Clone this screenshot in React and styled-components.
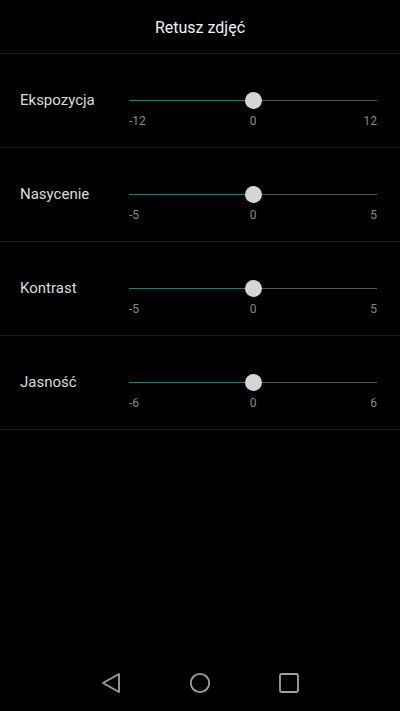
import styled, { createGlobalStyle } from 'styled-components'

const GlobalStyle = createGlobalStyle`
  html, body {
    margin: 0;
    padding: 0;
    background: #000;
  }
  * {
    box-sizing: border-box;
  }
`;

const adjustments = [
  { name: 'Ekspozycja', min: -12, max: 12, value: 0 },
  { name: 'Nasycenie', min: -5, max: 5, value: 0 },
  { name: 'Kontrast', min: -5, max: 5, value: 0 },
  { name: 'Jasność', min: -6, max: 6, value: 0 },
];

const Slider = ({ min, max, value }) => {
  const pct = ((value - min) / (max - min)) * 100;
  return (
    <SliderBox>
      <Track>
        <Fill style={{ width: `${pct}%` }} />
        <Thumb style={{ left: `${pct}%` }} />
      </Track>
      <Ticks>
        <span>{min}</span>
        <span>{value}</span>
        <span>{max}</span>
      </Ticks>
    </SliderBox>
  );
};

const App = () => {
  return (
    <Screen>
      <GlobalStyle />
      <Header>Retusz zdjęć</Header>
      {adjustments.map((a) => (
        <Row key={a.name}>
          <Label>{a.name}</Label>
          <Slider min={a.min} max={a.max} value={a.value} />
        </Row>
      ))}
      <NavBar>
        <NavButton>
          <svg width="20" height="22" viewBox="0 0 20 22">
            <path d="M18 2 L18 20 L2 11 Z" fill="none" stroke="#a0a0a0" strokeWidth="1.8" strokeLinejoin="round" />
          </svg>
        </NavButton>
        <NavButton>
          <svg width="22" height="22" viewBox="0 0 22 22">
            <circle cx="11" cy="11" r="9.2" fill="none" stroke="#a0a0a0" strokeWidth="1.8" />
          </svg>
        </NavButton>
        <NavButton>
          <svg width="22" height="22" viewBox="0 0 22 22">
            <rect x="2" y="2" width="18" height="18" rx="1.5" fill="none" stroke="#a0a0a0" strokeWidth="1.8" />
          </svg>
        </NavButton>
      </NavBar>
    </Screen>
  );
}

export default App

const Screen = styled.div`
  display: flex;
  flex-direction: column;
  width: 400px;
  min-height: 711px;
  background: #000;
  font-family: Roboto, "Noto Sans", "Liberation Sans", sans-serif;
`;

const Header = styled.div`
  height: 54px;
  padding-top: 2px;
  display: flex;
  align-items: center;
  justify-content: center;
  border-bottom: 1px solid #1c1c1c;
  color: #f2f2f2;
  font-size: 16px;
`;

const Row = styled.div`
  display: flex;
  align-items: flex-start;
  height: 94px;
  padding: 38px 23px 0 20px;
  border-bottom: 1px solid #1c1c1c;
`;

const Label = styled.div`
  width: 109px;
  line-height: 17px;
  font-size: 15px;
  color: #dcdcdc;
`;

const SliderBox = styled.div`
  flex: 1;
  display: flex;
  flex-direction: column;
`;

const Track = styled.div`
  position: relative;
  height: 17px;

  &::before {
    content: '';
    position: absolute;
    left: 0;
    right: 0;
    top: 8px;
    height: 1px;
    background: #575757;
  }
`;

const Fill = styled.div`
  position: absolute;
  left: 0;
  top: 8px;
  height: 1px;
  background: #1b7d7a;
`;

const Thumb = styled.div`
  position: absolute;
  top: 0;
  width: 17px;
  height: 17px;
  margin-left: -8.5px;
  border-radius: 50%;
  background: #d5d5d7;
`;

const Ticks = styled.div`
  display: grid;
  grid-template-columns: 1fr auto 1fr;
  margin-top: 5px;
  font-size: 12px;
  line-height: 14px;
  color: #888;

  span:first-child {
    justify-self: start;
  }
  span:last-child {
    justify-self: end;
  }
`;

const NavBar = styled.div`
  margin-top: auto;
  height: 56px;
  display: flex;
  align-items: center;
  justify-content: center;
  gap: 67px;
  padding-bottom: 1px;
`;

const NavButton = styled.div`
  width: 22px;
  height: 22px;
  display: flex;
  align-items: center;
  justify-content: center;
`;
